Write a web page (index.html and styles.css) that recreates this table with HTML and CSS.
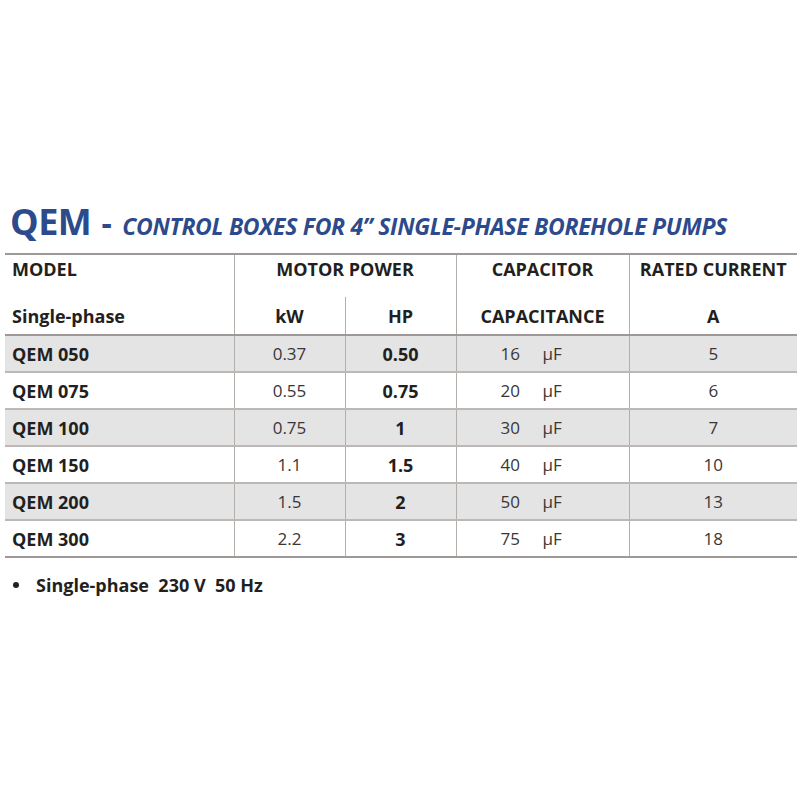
FILE: index.html
```html
<!DOCTYPE html>
<html>
<head>
<meta charset="utf-8">
<link rel="stylesheet" href="styles.css">
</head>
<body>
<div class="page">
  <h1 class="title"><span class="big">QEM</span> <span class="dash">-</span> <span class="sub">CONTROL BOXES FOR 4” SINGLE-PHASE BOREHOLE PUMPS</span></h1>
  <table class="spec">
    <colgroup>
      <col class="c-model"><col class="c-kw"><col class="c-hp"><col class="c-cap"><col class="c-cur">
    </colgroup>
    <thead>
      <tr class="h1">
        <th class="left">MODEL</th>
        <th colspan="2">MOTOR POWER</th>
        <th>CAPACITOR</th>
        <th>RATED CURRENT</th>
      </tr>
      <tr class="h2">
        <th class="left">Single-phase</th>
        <th>kW</th>
        <th>HP</th>
        <th>CAPACITANCE</th>
        <th>A</th>
      </tr>
    </thead>
    <tbody>
      <tr class="shade"><td class="model">QEM 050</td><td class="reg">0.37</td><td class="bold">0.50</td><td class="cap"><span class="num">16</span><span class="unit">μF</span></td><td class="reg">5</td></tr>
      <tr><td class="model">QEM 075</td><td class="reg">0.55</td><td class="bold">0.75</td><td class="cap"><span class="num">20</span><span class="unit">μF</span></td><td class="reg">6</td></tr>
      <tr class="shade"><td class="model">QEM 100</td><td class="reg">0.75</td><td class="bold">1</td><td class="cap"><span class="num">30</span><span class="unit">μF</span></td><td class="reg">7</td></tr>
      <tr><td class="model">QEM 150</td><td class="reg">1.1</td><td class="bold">1.5</td><td class="cap"><span class="num">40</span><span class="unit">μF</span></td><td class="reg">10</td></tr>
      <tr class="shade"><td class="model">QEM 200</td><td class="reg">1.5</td><td class="bold">2</td><td class="cap"><span class="num">50</span><span class="unit">μF</span></td><td class="reg">13</td></tr>
      <tr class="last"><td class="model">QEM 300</td><td class="reg">2.2</td><td class="bold">3</td><td class="cap"><span class="num">75</span><span class="unit">μF</span></td><td class="reg">18</td></tr>
    </tbody>
  </table>
  <div class="note"><span class="bullet"></span><span>Single-phase&nbsp; 230 V&nbsp; 50 Hz</span></div>
</div>
</body>
</html>
```

FILE: styles.css
```css
html, body {
  margin: 0;
  padding: 0;
  background: #ffffff;
}
.page {
  width: 800px;
  height: 800px;
  padding-top: 198px;
  box-sizing: border-box;
  font-family: "Open Sans", "Liberation Sans", sans-serif;
  color: #231f20;
}
.title {
  margin: 0 0 0 10px;
  height: 55px;
  line-height: 48px;
  font-weight: 700;
  color: #2c4a8c;
  white-space: nowrap;
}
.title .big {
  font-size: 36px;
  letter-spacing: -0.5px;
}
.title .dash {
  font-size: 32px;
  margin-left: 2px;
}
.title .sub {
  font-size: 23px;
  font-style: italic;
  letter-spacing: -0.3px;
  margin-left: 2px;
}
.spec {
  margin-left: 5px;
  width: 792px;
  border-collapse: collapse;
  table-layout: fixed;
  border-top: 2px solid #9e9896;
  border-bottom: 2px solid #9e9896;
}
.c-model { width: 229px; }
.c-kw { width: 111px; }
.c-hp { width: 111px; }
.c-cap { width: 173px; }
.c-cur { width: 168px; }
th, td {
  padding: 0;
  text-align: center;
  border-left: 1px solid #b3adab;
  font-size: 18px;
}
th:first-child, td:first-child {
  border-left: none;
}
th {
  font-weight: 700;
  color: #231f20;
}
th.left {
  text-align: left;
  padding-left: 7px;
}
.h1 th {
  height: 43px;
  vertical-align: top;
  padding-top: 1px;
  line-height: 26px;
  box-sizing: border-box;
}
.h2 th {
  height: 38px;
  line-height: 26px;
  vertical-align: middle;
  padding-top: 0;
  box-sizing: border-box;
  border-bottom: 2px solid #9e9896;
}
.h1 th:first-child, .h2 th:first-child {
  border-right: 1px solid #b3adab;
}
.h2 th:nth-child(3) {
  border-left: 1px solid #b3adab;
}
tbody td {
  height: 37px;
  box-sizing: border-box;
  border-bottom: 2px solid #bdb8b6;
  vertical-align: middle;
  line-height: 24px;
}
tbody tr.last td {
  border-bottom: 2px solid #9e9896;
}
tbody tr.shade td {
  background: #e4e4e4;
}
td.model {
  text-align: left;
  padding-left: 7px;
  font-weight: 700;
  color: #231f20;
}
td.reg {
  font-weight: 400;
  font-size: 17px;
  color: #3a3637;
}
td.bold {
  font-weight: 700;
  color: #231f20;
}
td.cap {
  text-align: left;
  padding-left: 44px;
  font-size: 17px;
  color: #3a3637;
}
.cap .num {
  display: inline-block;
  width: 42px;
}
.note {
  display: flex;
  align-items: center;
  margin: 15px 0 0 13px;
  font-size: 18px;
  font-weight: 700;
  color: #231f20;
}
.bullet {
  width: 6px;
  height: 6px;
  border-radius: 50%;
  background: #231f20;
  margin-right: 17px;
}
```
